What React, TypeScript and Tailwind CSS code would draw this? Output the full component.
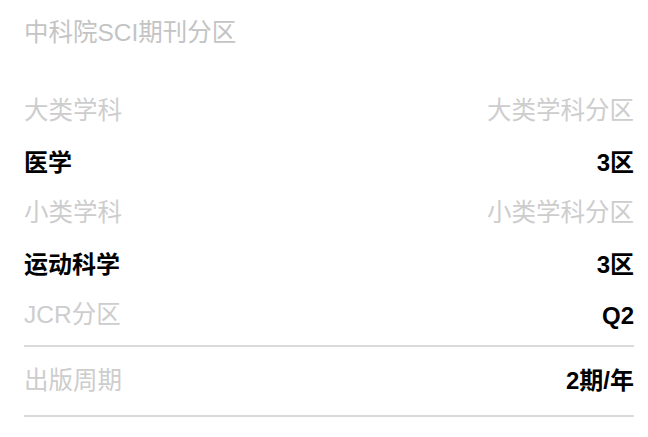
export default function App() {
  const rows = [
    { label: "大类学科", value: "大类学科分区", head: true },
    { label: "医学", value: "3区", head: false },
    { label: "小类学科", value: "小类学科分区", head: true },
    { label: "运动科学", value: "3区", head: false },
  ];

  return (
    <div
      className="w-[648px] h-[437px] bg-white pl-6 pr-[14px]"
      style={{ fontFamily: '"Liberation Sans", "Noto Sans CJK SC", sans-serif' }}
    >
      <div className="h-[67px] flex items-center text-[24.5px] text-[#c4c4c4]">
        中科院SCI期刊分区
      </div>

      <div className="mt-[19px]">
        {rows.map((r, i) => (
          <div
            key={i}
            className={
              r.head
                ? "h-[51px] flex items-center justify-between text-[24.5px] text-[#cdcdcd]"
                : "h-[51px] flex items-center justify-between text-[24px] font-bold text-black"
            }
          >
            <span>{r.label}</span>
            <span>{r.value}</span>
          </div>
        ))}
        <div className="h-[51px] flex items-center justify-between">
          <span className="text-[24.5px] text-[#cdcdcd]">JCR分区</span>
          <span className="text-[24px] font-bold text-black">Q2</span>
        </div>
      </div>

      <div className="mt-[4px] border-t-2 border-[#dadada]">
        <div className="h-[68px] flex items-center justify-between">
          <span className="text-[24.5px] text-[#cdcdcd]">出版周期</span>
          <span className="text-[24px] font-bold text-black">2期/年</span>
        </div>
      </div>
      <div className="border-t-2 border-[#dadada]" />
    </div>
  );
}
